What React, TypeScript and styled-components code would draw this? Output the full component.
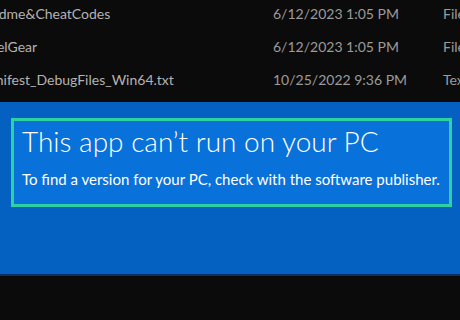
import React from "react";
import styled, { createGlobalStyle } from "styled-components";

const GlobalStyle = createGlobalStyle`
  *, *::before, *::after {
    box-sizing: border-box;
  }
  html, body {
    margin: 0;
    padding: 0;
    background: #0c0c0c;
  }
  body {
    width: 460px;
    height: 320px;
    overflow: hidden;
    font-family: Lato, "Noto Sans", sans-serif;
  }
`;

const Screen = styled.div`
  width: 460px;
  height: 320px;
  background: #0c0b0b;
  overflow: hidden;
`;

const FileList = styled.div`
  margin: -3px 0 0 -24px;
  padding-bottom: 6px;
`;

const Row = styled.div`
  display: grid;
  grid-template-columns: 297px 170px 60px;
  height: 33px;
  align-items: center;
  font-size: 14px;
  white-space: nowrap;
`;

const Cell = styled.span<{ $dim?: boolean }>`
  color: ${(p) => (p.$dim ? "#9b9b9b" : "#b3b3b3")};
`;

const Dialog = styled.div`
  height: 174px;
  background: #0460c1;
  border-bottom: 2px solid #0b2d6b;
  padding: 16px 8px 0 11px;
`;

const Highlight = styled.div`
  height: 89px;
  border: 3px solid #2bd2a2;
  background: #0871da;
  padding: 0 0 0 8px;
  display: flex;
  flex-direction: column;
  color: #fff;
`;

const Title = styled.h1`
  margin: 1px 0 0;
  font-size: 28px;
  font-weight: 300;
  line-height: 38px;
  white-space: nowrap;
`;

const Message = styled.p`
  margin: 9px 0 0;
  font-size: 15px;
  font-weight: 400;
  line-height: 20px;
  white-space: nowrap;
`;

const files = [
  { name: "Readme&CheatCodes", date: "6/12/2023 1:05 PM", type: "File folder" },
  { name: "LevelGear", date: "6/12/2023 1:05 PM", type: "File folder" },
  { name: "Manifest_DebugFiles_Win64.txt", date: "10/25/2022 9:36 PM", type: "Text Document" },
];

export default function App() {
  return (
    <Screen>
      <GlobalStyle />
      <FileList>
        {files.map((f) => (
          <Row key={f.name}>
            <Cell>{f.name}</Cell>
            <Cell $dim>{f.date}</Cell>
            <Cell $dim>{f.type}</Cell>
          </Row>
        ))}
      </FileList>
      <Dialog>
        <Highlight>
          <Title>This app can’t run on your PC</Title>
          <Message>To find a version for your PC, check with the software publisher.</Message>
        </Highlight>
      </Dialog>
    </Screen>
  );
}
